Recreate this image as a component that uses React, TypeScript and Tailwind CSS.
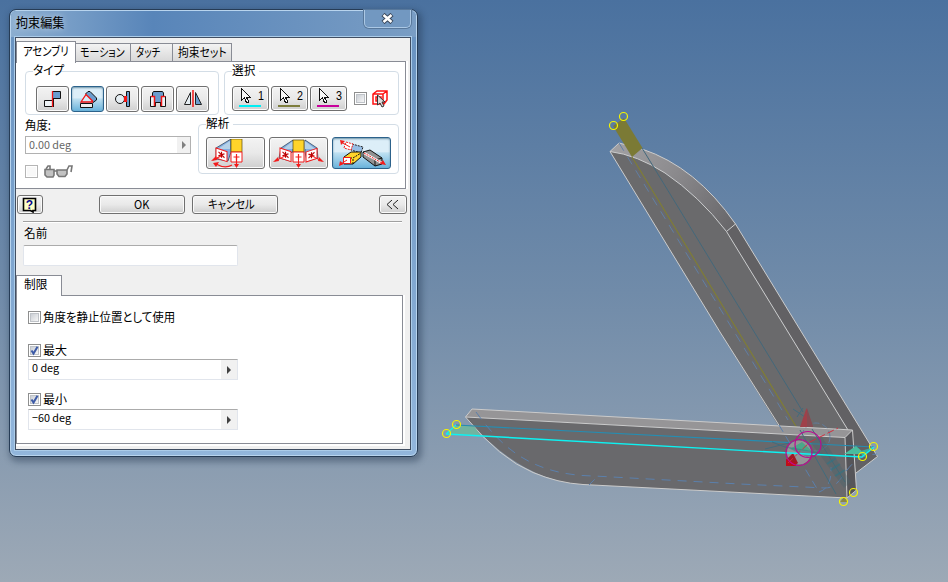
import React from "react";

function T({ children, className = "" }: { children: React.ReactNode; className?: string }) {
  return <span className={"block h-4 origin-left -translate-y-px whitespace-nowrap leading-4 " + className}>{children}</span>;
}

const raised = "rounded-[3px] border border-[#707070] bg-linear-to-b from-[#f3f3f3] via-[#e9e9e9] to-[#cfcfcf] shadow-[inset_0_0_0_1px_#fafafa]";
const pressed = "rounded-[3px] border border-[#2c628b] bg-linear-to-b from-[#dceef8] from-45% via-[#bee0f1] via-50% to-[#68b3db] shadow-[inset_0_1px_2px_#6f94a8]";

function Btn({ active = false, className = "", children }: { active?: boolean; className?: string; children?: React.ReactNode }) {
  return (
    <button className={"flex shrink-0 items-center justify-center " + (active ? pressed : raised) + " " + className}>{children}</button>
  );
}

function Check({ on = false, dim = false }: { on?: boolean; dim?: boolean }) {
  return (
    <span className={"block size-[13px] shrink-0 border bg-white p-px " + (dim ? "border-[#b5b5b5]" : "border-[#8e8f8f]")}>
      <span className={"block size-[9px] " + (dim ? "bg-[#f8f8f8]" : "border border-[#bfc3c8] bg-linear-to-br from-[#cbcfd5] to-[#f6f6f6]")}>
        {on && (
          <svg width="9" height="9" viewBox="1 1 9 9" className="-m-px block overflow-visible">
            <path d="M2.5 5.5 4.5 8.5 8.5 1.7" fill="none" stroke="#3c5aa6" strokeWidth="2" />
          </svg>
        )}
      </span>
    </span>
  );
}

function Group({ label, labelClass, className, children }: { label: string; labelClass: string; className: string; children: React.ReactNode }) {
  return (
    <div className={"shrink-0 rounded-[4px] border border-[#d3dde6] " + className}>
      <div className={"-mt-[9px] ml-[7px] h-4 bg-white " + labelClass}>
        <T className="scale-x-[.97]">{label}</T>
      </div>
      {children}
    </div>
  );
}

function Cursor({ n, line }: { n: string; line: string }) {
  return (
    <Btn className="h-[25px] w-[37px]">
      <svg width="35" height="23" shapeRendering="crispEdges">
        <path d="M8.500 1.500V13.500L11.500 11 13.500 15.500H15.500V14L13.500 10.500H17.500Z" fill="#f8f8f8" stroke="#111" />
        <text x="25" y="13" fontSize="12" fontFamily="Liberation Sans, sans-serif" textLength="6" lengthAdjust="spacingAndGlyphs">{n}</text>
        <path d="M6 19H28" stroke={line} strokeWidth="2" />
      </svg>
    </Btn>
  );
}

function Spin({ value, dim = false, className }: { value: string; dim?: boolean; className: string }) {
  return (
    <div className={"flex border bg-white " + (dim ? "border-[#b1b1b1] text-[#666] " : "border-[#e1e5ec] border-t-[#ababab] ") + className}>
      <T className="ml-[3px] flex-1 text-[11px] scale-x-[.98]">{value}</T>
      <span className={"flex items-center justify-center bg-[#f1f1f1] " + (dim ? "w-[13px]" : "w-4")}>
        <svg width="4" height="8"><path d="M0 0 4 4 0 8Z" fill={dim ? "#808080" : "#404040"} /></svg>
      </span>
    </div>
  );
}

function FaceMark({ x, y, skew = 0 }: { x: number; y: number; skew?: number }) {
  return (
    <g transform={"translate(" + x + " " + y + ") skewY(" + skew + ")"}>
      <path d="M0 0H11V10H0Z" fill="#fff" stroke="#f31c1c" />
      {skew ? (
        <path d="M5.500 2V8M2.500 3 8.500 7M2.500 7 8.500 3" stroke="#b00" strokeWidth="1.200" />
      ) : (
        <path d="M5.500 2V8M2.500 5H8.500" stroke="#f31c1c" strokeWidth="1.200" />
      )}
    </g>
  );
}

function AngleIcon({ both = false }: { both?: boolean }) {
  return (
    <svg width="57" height="29" viewBox="0 0 57 29">
      {both ? (
        <g>
          <path d="M11 9 23 1V13L20 14V22L9 19Z" fill="#83aee0" stroke="#24384e" strokeWidth=".7" />
          <path d="M47 9 35 1V13L37 22 48 19Z" fill="#83aee0" stroke="#24384e" strokeWidth=".7" />
          <path d="M13 10 23 2V10ZM45 10 35 2V10Z" fill="#b5d1e8" />
          <path d="M23 1H34V13H23Z" fill="#ffd42a" stroke="#5b4b0a" strokeWidth=".7" />
          <FaceMark x={10} y={9} skew={18} />
          <FaceMark x={23} y={13} />
          <FaceMark x={36} y={13} skew={-18} />
          <path d="M15 17 5 22M42 17 52 22M28.500 18V27" stroke="#f31c1c" />
          <path d="M3 23 8 18 9 22ZM54 23 49 18 48 22ZM26 25H31L28.500 29Z" fill="#f31c1c" />
        </g>
      ) : (
        <g>
          <path d="M9 9 24 0V13L21 22 9 20Z" fill="#83aee0" stroke="#24384e" strokeWidth=".7" />
          <path d="M11 10 23 2V10Z" fill="#b5d1e8" />
          <path d="M24 0H35V13H24Z" fill="#ffd42a" stroke="#5b4b0a" strokeWidth=".7" />
          <FaceMark x={9} y={9} skew={18} />
          <FaceMark x={24} y={13} />
          <path d="M14 17 6 21M29.500 18V27M9 25Q18 30 25 26" fill="none" stroke="#f31c1c" strokeWidth="1.200" />
          <path d="M4 22 9 17 10 21ZM27 25H32L29.500 29ZM6 24 12 23 9 28Z" fill="#f31c1c" />
        </g>
      )}
    </svg>
  );
}

function ShaftIcon() {
  return (
    <svg width="57" height="29" viewBox="0 0 57 29">
      <path d="M19 5 30 8 28 14 18 11Z" fill="#96bde5" stroke="#222" strokeDasharray="2 1" />
      <path d="M11 18 18 13H28V18L20 25H11Z" fill="#ffd42a" stroke="#111" />
      <path d="M20 25V19L28 14M11 19H20" fill="none" stroke="#111" strokeDasharray="2 1" />
      <path d="M30 13 37 11 49 19V25L42 27 30 18Z" fill="#929292" stroke="#111" />
      <path d="M30 13 42 21 49 19M42 21V27" fill="none" stroke="#111" />
      <path d="M13 3 20 5 18 11 11 9Z" fill="#fff" stroke="#f31c1c" strokeDasharray="2 1" />
      <path d="M10.500 18.500H17.500V24.500H10.500Z" fill="#fff" stroke="#f31c1c" />
      <path d="M8 3 17 8M14 21 8 25" fill="none" stroke="#f31c1c" />
      <path d="M31 14 49 24" stroke="#fff" strokeWidth="2.500" /><path d="M31 14 49 24" stroke="#f31c1c" strokeDasharray="2 1" />
      <path d="M7 1 12 2 8 6ZM6 27 7 22 11 25ZM53 26 47 25 50 21Z" fill="#f31c1c" />
    </svg>
  );
}

function Mate() {
  return (
    <svg width="20" height="18">
      <path d="M9.500 1.500H17.500V8.500H9.500Z" fill="#6b9dce" stroke="#111" />
      <path d="M1.500 10.500H9.500V16.500H1.500Z" fill="#eef2f5" stroke="#111" />
      <path d="M10.500 9V17" stroke="#111" /><path d="M9.500 1V17" stroke="#f21414" strokeWidth="1.300" />
    </svg>
  );
}
function Angle() {
  return (
    <svg width="20" height="19">
      <path d="M7.500 4 10 1.500H12L18.500 8V10L15 12.500Z" fill="#6b9dce" stroke="#111" />
      <path d="M3 11.500 8 4 15 11.500Z" fill="#d7ecf7" />
      <path d="M2.500 13.500H14.500V17.500H2.500Z" fill="#eee" stroke="#111" />
      <path d="M15 12H3L8 4.500 15 11.500" fill="none" stroke="#f21414" strokeWidth="1.300" />
    </svg>
  );
}
function Tangent() {
  return (
    <svg width="18" height="18">
      <circle cx="6" cy="9" r="4.500" fill="#e5edf2" stroke="#111" />
      <path d="M12.500 1.500H15.500V16.500H12.500Z" fill="#6b9dce" stroke="#111" />
      <path d="M11.500 6V12" stroke="#f21414" strokeWidth="3" />
    </svg>
  );
}
function Insert() {
  return (
    <svg width="20" height="19">
      <path d="M2.500 6.500H7.500V16.500H2.500ZM12.500 6.500H17.500V16.500H12.500Z" fill="#eef2f5" stroke="#111" />
      <path d="M5.500 1.500H14.500L15.500 3V6.500H13.500V12.500H6.500V6.500H4.500V3Z" fill="#6b9dce" stroke="#111" />
      <path d="M3 6.500H6.500V16M17 6.500H13.500V16" fill="none" stroke="#f21414" strokeWidth="1.500" />
    </svg>
  );
}
function Mirror() {
  return (
    <svg width="20" height="18">
      <path d="M1.500 14.500 7.500 2.500V14.500Z" fill="#e5edf2" stroke="#222" />
      <path d="M12.500 2.500 18.500 14.500H12.500Z" fill="#6b9dce" stroke="#222" />
      <path d="M10 0V17" stroke="#f21414" strokeWidth="1.500" />
    </svg>
  );
}

function Scene() {
  return (
    <svg width="948" height="582" viewBox="0 0 948 582" className="absolute inset-0">
      <defs>
        <linearGradient id="sky" x1="0" y1="0" x2="0" y2="1"><stop offset="0" stopColor="#4a719f" /><stop offset=".5" stopColor="#708ba9" /><stop offset="1" stopColor="#9da9b6" /></linearGradient>
        <linearGradient id="bevel" gradientUnits="userSpaceOnUse" x1="615" y1="145" x2="735" y2="228"><stop offset="0" stopColor="#a1a0a3" /><stop offset=".4" stopColor="#8e8d90" /><stop offset="1" stopColor="#666568" /></linearGradient>
      </defs>
      <path d="M0 0H948V582H0Z" fill="url(#sky)" />
      <g strokeWidth="1" fill="none" strokeLinejoin="round">
        <path d="M726.500 231.500 735.500 224 877.500 456.500 856 473 848 430Z" fill="#626164" />
        <path d="M610 151.500Q637 155 665 173Q699 196 726.500 231.500L848 430 856 473 806 470 720 332Z" fill="#6a6a6c" />
        <path d="M610 151.500 619 143 642 149Q696 167 735.500 224L726.500 231.500Q699 196 665 173Q637 155 610 151.500Z" fill="url(#bevel)" />
        <path d="M806 468 720 332 610 151.500 619 143 642 149Q696 167 735.500 224L877.500 456.500 856 473M610 151.500Q637 155 665 173Q699 196 726.500 231.500L848 430M726.500 231.500 735.500 224" stroke="#cccccc" />
        <path d="M613 126 624 118 642.500 148 632 157Z" fill="#7b7a35" />
        <path d="M632 157 797 428" stroke="#7f7d36" strokeWidth="1.200" /><path d="M642 148 803 412" stroke="#43687b" />
        <path d="M619 143 788 420" stroke="#617fa4" strokeDasharray="9 7" />
        <path d="M845 437.500 852 429.500 856.500 490 847 498Z" fill="#565559" />
        <path d="M465.500 417 472 409 852.500 430 845 437.500Z" fill="#969597" />
        <path d="M465.500 417 845 437.500 847 498 583 484.500Q520 481 465.500 417Z" fill="#69696c" />
        <path d="M465.500 417 472 409 852.500 430 845 437.500ZM465.500 417Q500 459 533 472.500Q558 483 583 484.500L847 498 845 437.500M852.500 430 856.500 490 847 498" stroke="#cbcbcb" />
        <path d="M446 434 456 425 474 426 481 436Z" fill="#72b3a0" />
        <path d="M456 425 874 447" stroke="#268db1" strokeWidth="1.200" />
        <path d="M476 412C500 445 529 475 594 476L740 484 825 488C846 488 842 456 877 454" stroke="#5b80ac" strokeDasharray="9 7" />
        <path d="M779 425 819 492Q832 488 831 467M589 485 597 477" stroke="#5b80ac" strokeDasharray="8 5" />
        <circle cx="816" cy="437" r="14" stroke="#607d9d" strokeDasharray="6 3" />
        <path d="M800 430 836 494M812 429 845 482M793 409 805 417M797 417 803 408M765 449 789 443M772 442 790 449" stroke="#416c7d" />
        <path d="M809 440 822 437 851 482 844 488Z" fill="#46636e" opacity=".35" />
        <path d="M827 464 836 458M831 470 840 464M835 476 845 470" stroke="#2e7486" strokeWidth="2" opacity=".6" />
        <path d="M806.500 408 800 427H813Z" fill="#9f414a" /><path d="M807 408V427H813Z" fill="#854c53" />
        <circle cx="799" cy="452.500" r="12" fill="#969497" />
        <path d="M790 449 802 442 813 452Z" fill="#49a889" /><path d="M784 446 823 453 807 457Z" fill="#317780" opacity=".5" />
        <path d="M844 454 856 446 865 454Z" fill="#49bd9e" /><path d="M861 451 874 447 862 457Z" fill="#38ae9f" />
        <path d="M786 466V460L793 453 798 463 794 466Z" fill="#a01923" /><path d="M786 459 796 463V466H786Z" fill="#c00d19" />
        <path d="M788 463 810 442 838 428" stroke="#d22d3d" strokeDasharray="7 3" />
        <path d="M446 434 862 457 874 447M446 434 456 425" stroke="#0df2f2" strokeWidth="1.400" />
        <g stroke="#bb0b91" strokeWidth="1.200"><circle cx="808" cy="444.500" r="13" /><circle cx="799" cy="452.500" r="13" /></g>
        <path d="M840 502 844 497 848 502Z" fill="#8b8745" />
        <g stroke="#f5f500" strokeWidth="1.200">
          {[[613.5, 125.5], [623.5, 116.5], [446.5, 433.5], [456.5, 424.5], [873.5, 446.5], [862.5, 456.5], [853.5, 492.5], [843.5, 501.5]].map(([x, y]) => <circle key={x} cx={x} cy={y} r="4" />)}
        </g>
      </g>
    </svg>
  );
}

export default function App() {
  return (
    <main className="relative h-[582px] w-[948px] overflow-hidden bg-[#708ba9] font-['Noto_Sans_CJK_JP','Noto_Sans',sans-serif] text-[12px] text-black [font-feature-settings:'palt']">
      <Scene />
      <section className="absolute top-[9px] left-[9px] flex h-[448px] w-[409px] flex-col rounded-[7px] border border-[#263c56] bg-linear-to-b from-[#6791bf] to-[#92b6dc] px-[5px] shadow-[inset_0_0_0_1px_#b8d4ee,2px_3px_6px_2px_#1b304966]">
        <header className="-mx-[4px] mt-px flex h-[26px] shrink-0 justify-between rounded-t-[5px] bg-linear-to-r from-[#8caed0] via-[#5885b9] via-35% to-[#799dc4] pr-[5px] pl-[5px]">
          <T className="mt-[4px] text-[13px] scale-x-[.93] [text-shadow:0_0_7px_#ffffffb0]">拘束編集</T>
          <button className="-mt-px flex h-[18px] w-[47px] items-center justify-center rounded-b-[5px] border border-t-0 border-[#abc8e5] bg-[#7298c1] shadow-[0_0_0_1px_#58789b]">
            <svg width="13" height="11"><path d="M2 1.500 11 9.500M11 1.500 2 9.500" stroke="#39475a" strokeWidth="4.500" /><path d="M2.500 2 10.500 9M10.500 2 2.500 9" stroke="#fff" strokeWidth="2.500" /></svg>
          </button>
        </header>
        <div className="flex h-[413px] w-[396px] shrink-0 flex-col border border-[#414e62] bg-[#f0f0f0] shadow-[0_0_0_1px_#abcce9]">
          <div className="mt-[3px] flex h-[21px] shrink-0 items-end">
            <div className="relative z-10 -mb-px h-[22px] w-[60px] border border-b-0 border-[#898c95] bg-white pt-[2px] pl-[6px]"><T className="scale-x-[.86]">アセンブリ</T></div>
            <div className="h-[19px] w-[55px] border border-l-0 border-[#898c95] bg-linear-to-b from-[#f3f3f3] to-[#d9d9d9] pt-px pl-[4px]"><T className="scale-x-[.83]">モーション</T></div>
            <div className="h-[19px] w-[42px] border border-l-0 border-[#898c95] bg-linear-to-b from-[#f3f3f3] to-[#d9d9d9] pt-px pl-[5px]"><T className="scale-x-[.78]">タッチ</T></div>
            <div className="h-[19px] w-[59px] border border-l-0 border-[#898c95] bg-linear-to-b from-[#f3f3f3] to-[#d9d9d9] pt-px pl-[5px]"><T className="scale-x-[.9]">拘束セット</T></div>
          </div>
          <div className="-mt-px h-[128px] w-[390px] shrink-0 border border-l-0 border-[#898c95] bg-white shadow-[2px_0_0_#fff]">
            <div className="flex gap-[5px] pt-[9px] pl-[9px]">
              <Group label="タイプ" labelClass="w-[28px]" className="h-[44px] w-[194px]">
                <div className="mt-[7px] ml-[10px] flex gap-[2px]">
                  <Btn className="h-[26px] w-[33px]"><Mate /></Btn>
                  <Btn active className="h-[26px] w-[33px]"><Angle /></Btn>
                  <Btn className="h-[26px] w-[33px]"><Tangent /></Btn>
                  <Btn className="h-[26px] w-[33px]"><Insert /></Btn>
                  <Btn className="h-[26px] w-[33px]"><Mirror /></Btn>
                </div>
              </Group>
              <Group label="選択" labelClass="w-[27px]" className="h-[44px] w-[175px]">
                <div className="mt-[7px] ml-[7px] flex items-center gap-[2px]">
                  <Cursor n="1" line="#00eef4" />
                  <Cursor n="2" line="#7d7d3d" />
                  <Cursor n="3" line="#c8009c" />
                  <span className="ml-[5px]"><Check /></span>
                  <svg className="ml-[3px]" width="17" height="18"><path d="M1 4 5 1H15V10L12 14H1ZM1 4H11V14M11 4 15 1M4 7H9V11H4Z" fill="none" stroke="#ff1111" strokeWidth="1.500" /><path d="M5.500 5V15L8 13 10 17 12 16 10 12H13Z" fill="#ddd" stroke="#333" /></svg>
                </div>
              </Group>
            </div>
            <div className="flex pl-[9px]">
              <div className="w-[173px] pt-[3px]">
                <T className="scale-x-[.95]">角度:</T>
                <Spin value="0.00 deg" dim className="mt-[2px] h-[18px] w-[166px]" />
                <div className="mt-[11px] flex h-[13px] items-center gap-[6px]">
                  <Check dim />
                  <svg width="29" height="13"><path d="M1 4.500H10V10L9 12H3L1 10ZM13 5H23V9L21 11.500H15L13 9Z" fill="#c2c2c2" stroke="#777" strokeWidth="1.600" /><path d="M10 6H13M2 4 4 1H6V4M23 5 25 1H28L27 7" fill="none" stroke="#777" strokeWidth="1.600" /></svg>
                </div>
              </div>
              <Group label="解析" labelClass="w-[27px]" className="mt-[9px] h-[50px] w-[201px]">
                <div className="mt-[5px] ml-[7px] flex gap-[4px]">
                  <Btn className="h-[32px] w-[59px]"><AngleIcon /></Btn>
                  <Btn className="h-[32px] w-[59px]"><AngleIcon both /></Btn>
                  <Btn active className="h-[32px] w-[59px]"><ShaftIcon /></Btn>
                </div>
              </Group>
            </div>
          </div>
          <div className="mt-[6px] flex h-[19px] shrink-0 pl-px">
            <Btn className="w-[26px]">
              <svg width="16" height="16"><path d="M1.500 1.500H13.500V13.500H11V15L8.500 13.500H1.500Z" fill="#ffffc8" stroke="#000" strokeWidth="1.600" /><text x="7.500" y="12" textAnchor="middle" fill="#08088d" fontFamily="Liberation Sans" fontWeight="700" fontSize="12">?</text></svg>
            </Btn>
            <Btn className="ml-[56px] w-[86px]"><T className="origin-center scale-x-[.92]">OK</T></Btn>
            <Btn className="ml-[7px] w-[86px]"><T className="origin-center scale-x-[.86]">キャンセル</T></Btn>
            <Btn className="ml-[101px] w-[28px]"><svg width="14" height="10"><path d="M6 0 1 4.500 6 9M12 0 7 4.500 12 9" fill="none" stroke="#222" /></svg></Btn>
          </div>
          <div className="mt-[7px] ml-[7px] h-[2px] w-[379px] shrink-0 border-t border-[#a0a0a0] bg-white" />
          <T className="mt-[3px] ml-[8px] scale-x-[.97]">名前</T>
          <div className="mt-[3px] ml-[7px] h-[21px] w-[215px] shrink-0 rounded-[2px] border border-[#e1e5ec] border-t-[#ababab] bg-white" />
          <div className="relative z-10 mt-[9px] -mb-px h-[21px] w-[46px] shrink-0 border border-b-0 border-[#898c95] bg-white pt-px pl-[7px]"><T className="scale-x-[.97]">制限</T></div>
          <div className="h-[149px] w-[387px] shrink-0 border border-[#898c95] bg-white pt-[15px] pl-[11px] shadow-[1px_1px_0_1px_#fff]">
            <div className="flex h-[13px] items-center gap-[2px]"><Check /><T className="scale-x-[.955]">角度を静止位置として使用</T></div>
            <div className="mt-[20px] flex h-[13px] items-center gap-[2px]"><Check on /><T>最大</T></div>
            <Spin value="0 deg" className="mt-[2px] h-[21px] w-[210px]" />
            <div className="mt-[13px] flex h-[13px] items-center gap-[2px]"><Check on /><T>最小</T></div>
            <Spin value="−60 deg" className="mt-[3px] h-[21px] w-[210px]" />
          </div>
        </div>
      </section>
    </main>
  );
}
